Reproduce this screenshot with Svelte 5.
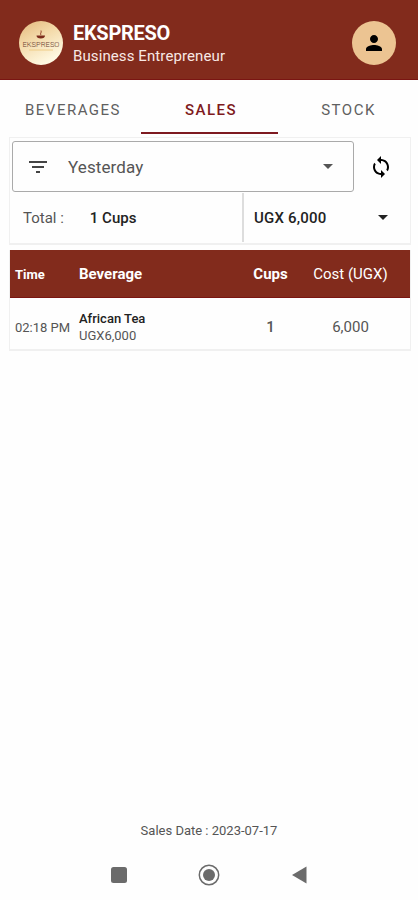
<script>
	let tabs = ["Beverages", "Sales", "Stock"];
	let active = "Sales";
	let filter = "Yesterday";
	let currency = "UGX";
	let salesDate = "2023-07-17";
	let sales = [
		{ time: "02:18 PM", beverage: "African Tea", price: 6000, cups: 1 },
	];

	/**
	 *
	 * @param {number} n
	 */
	function format(n) {
		return n.toLocaleString("en-US");
	}

	$: totalCups = sales.reduce((sum, sale) => sum + sale.cups, 0);
	$: totalCost = sales.reduce((sum, sale) => sum + sale.cups * sale.price, 0);
</script>

<div class="screen">
	<header>
		<svg class="logo" viewBox="0 0 44 44">
			<defs>
				<linearGradient id="gold" x1="0" y1="0" x2="0.5" y2="1">
					<stop offset="0" stop-color="#e3b77c" />
					<stop offset="0.45" stop-color="#f3d9a8" />
					<stop offset="1" stop-color="#fff9e2" />
				</linearGradient>
			</defs>
			<circle cx="22" cy="22" r="22" fill="url(#gold)" />
			<path d="M17.500 14.500h8.500c0 2-1.500 3-4.200 3s-4.300-1-4.300-3z" fill="#7c2c1c" />
			<path d="M22 14c-1.500-1.500 1-2.200 0-4.500" fill="none" stroke="#9a4a30" stroke-width="1" />
			<text x="22" y="26" text-anchor="middle" textLength="37" lengthAdjust="spacingAndGlyphs">EKSPRESO</text>
			<path d="M10 29h24" stroke="#f0cd88" stroke-width="1" />
		</svg>
		<div class="titles">
			<h1>EKSPRESO</h1>
			<p>Business Entrepreneur</p>
		</div>
		<button class="avatar" aria-label="Profile">
			<svg width="24" height="24" viewBox="0 0 24 24">
				<path d="M12 12c2.210 0 4-1.790 4-4s-1.790-4-4-4-4 1.790-4 4 1.790 4 4 4zm0 2c-2.670 0-8 1.340-8 4v2h16v-2c0-2.660-5.330-4-8-4z" />
			</svg>
		</button>
	</header>

	<nav>
		{#each tabs as tab (tab)}
			<button class:active={tab === active} on:click={() => (active = tab)}>{tab}</button>
		{/each}
	</nav>

	<section class="card summary">
		<div class="filter">
			<button class="select">
				<svg width="24" height="24" viewBox="0 0 24 24">
					<path d="M10 18h4v-2h-4v2zM3 6v2h18V6H3zm3 7h12v-2H6v2z" />
				</svg>
				<span>{filter}</span>
				<i class="caret"></i>
			</button>
			<button class="sync" aria-label="Refresh">
				<svg width="24" height="24" viewBox="0 0 24 24">
					<path d="M12 4V1L8 5l4 4V6c3.310 0 6 2.690 6 6 0 1.010-.25 1.970-.7 2.800l1.460 1.460C19.540 15.030 20 13.570 20 12c0-4.420-3.580-8-8-8zm0 14c-3.310 0-6-2.690-6-6 0-1.010.25-1.970.7-2.800L5.240 7.740C4.460 8.970 4 10.430 4 12c0 4.420 3.580 8 8 8v3l4-4-4-4v3z" />
				</svg>
			</button>
		</div>
		<div class="totals">
			<div class="cups">
				<span>Total :</span>
				<b>{totalCups} Cups</b>
			</div>
			<div class="amount">
				<b>{currency} {format(totalCost)}</b>
				<i class="caret dark"></i>
			</div>
		</div>
	</section>

	<section class="card sales">
		<div class="row head">
			<span class="small">Time</span>
			<span>Beverage</span>
			<span class="center">Cups</span>
			<span class="center cost">Cost ({currency})</span>
		</div>
		{#each sales as sale}
			<div class="row">
				<span class="time">{sale.time}</span>
				<div class="beverage">
					<b>{sale.beverage}</b>
					<span>{currency}{format(sale.price)}</span>
				</div>
				<span class="center count">{sale.cups}</span>
				<span class="center price">{format(sale.cups * sale.price)}</span>
			</div>
		{/each}
	</section>

	<footer>Sales Date : {salesDate}</footer>

	<div class="system">
		<svg width="16" height="16" viewBox="0 0 16 16">
			<rect width="16" height="16" rx="2.500" />
		</svg>
		<svg width="22" height="22" viewBox="0 0 22 22">
			<circle cx="11" cy="11" r="9.700" fill="none" stroke="#6b6b6b" stroke-width="1.500" />
			<circle cx="11" cy="11" r="6" />
		</svg>
		<svg width="16" height="18" viewBox="0 0 16 18">
			<path d="M15.500 0.500v17L1 9z" />
		</svg>
	</div>
</div>

<style>
	:global(body) {
		margin: 0;
		background: #fefefe;
	}
	.screen {
		display: flex;
		flex-direction: column;
		box-sizing: border-box;
		height: 900px;
		font-family: Roboto, sans-serif;
		color: #555;
	}
	button {
		border: 0;
		padding: 0;
		background: none;
		font: inherit;
		color: inherit;
	}
	svg {
		display: block;
		flex: none;
	}
	header {
		display: flex;
		align-items: center;
		box-sizing: border-box;
		height: 80px;
		padding: 6px 22px 0 19px;
		background: #822b1c;
		border-bottom: 1px solid #7a1512;
		color: #fff;
	}
	.logo {
		width: 44px;
		height: 44px;
		overflow: visible;
	}
	.logo text {
		font-size: 8px;
		font-weight: 300;
		fill: #6a4030;
	}
	.titles {
		flex: 1;
		margin-left: 10px;
		padding-top: 3px;
	}
	h1 {
		margin: 0;
		font-size: 20px;
		line-height: 24px;
		font-weight: 700;
		letter-spacing: -0.300px;
	}
	p {
		margin: 0;
		font-size: 15px;
		line-height: 22px;
		letter-spacing: 0.100px;
		color: #f8e8e4;
	}
	.avatar {
		display: grid;
		place-items: center;
		width: 44px;
		height: 44px;
		border-radius: 50%;
		background: #ecc492;
	}
	nav {
		display: grid;
		grid-template-columns: 141px 137px 140px;
		height: 54px;
	}
	nav button {
		padding-top: 7px;
		padding-left: 5px;
		border-bottom: 2px solid transparent;
		font-size: 15px;
		letter-spacing: 1.500px;
		text-transform: uppercase;
		color: #606060;
	}
	nav button:last-child {
		padding-left: 1px;
	}
	nav button.active {
		padding-left: 3px;
		border-color: #7e1a20;
		color: #7e1a20;
		font-weight: 500;
	}
	.card {
		box-sizing: border-box;
		width: 402px;
		margin-left: 9px;
		border: 1px solid #f0f0f0;
		border-width: 1px 1px 2px;
	}
	.summary {
		height: 108px;
		margin-top: 3px;
	}
	.filter {
		display: flex;
		padding: 3px 2px 0 2px;
	}
	.select {
		display: flex;
		align-items: center;
		box-sizing: border-box;
		width: 342px;
		height: 51px;
		padding: 0 20px 0 13px;
		border: 1px solid #aaa;
		border-radius: 3px;
		font-size: 17px;
		letter-spacing: 0.100px;
		text-align: left;
	}
	.select span {
		flex: 1;
		margin-left: 18px;
		padding-top: 1px;
	}
	.select svg {
		fill: #444;
	}
	.caret {
		border: 5px solid transparent;
		border-top-color: #555;
		border-bottom: 0;
	}
	.caret.dark {
		border-top-color: #222;
	}
	.sync {
		flex: 1;
		display: grid;
		place-items: center;
	}
	.totals {
		display: flex;
		height: 49px;
		margin-top: 1px;
		font-size: 15px;
	}
	.totals b {
		font-weight: 500;
		color: #222;
	}
	.cups {
		display: flex;
		align-items: center;
		gap: 26px;
		box-sizing: border-box;
		width: 234px;
		padding-left: 13px;
		border-right: 2px solid #ddd;
	}
	.amount {
		flex: 1;
		display: flex;
		align-items: center;
		justify-content: space-between;
		padding: 0 22px 0 10px;
		letter-spacing: 0.200px;
	}
	.sales {
		margin-top: 5px;
		border-top: 0;
	}
	.row {
		display: grid;
		grid-template-columns: 64px 158px 67px 93px;
		align-items: center;
		box-sizing: border-box;
		height: 51px;
		padding-left: 5px;
		font-size: 15px;
	}
	.head {
		height: 48px;
		padding-top: 1px;
		background: #822b1c;
		border-bottom: 1px solid #7a1512;
		color: #fff;
		font-weight: 700;
	}
	.small {
		font-size: 13px;
	}
	.center {
		text-align: center;
	}
	.cost {
		font-weight: 400;
	}
	.time {
		padding-top: 7px;
		font-size: 13px;
		white-space: nowrap;
	}
	.beverage {
		display: flex;
		flex-direction: column;
		padding-top: 7px;
		font-size: 13px;
		line-height: 17px;
	}
	.beverage b {
		font-weight: 500;
		color: #222;
	}
	.count,
	.price {
		padding-top: 7px;
	}
	.count {
		font-weight: 500;
	}
	footer {
		margin-top: auto;
		padding-bottom: 18px;
		font-size: 13px;
		line-height: 17px;
		text-align: center;
	}
	.system {
		display: grid;
		grid-template-columns: repeat(3, 90px);
		place-content: center;
		place-items: center;
		height: 36px;
		margin-bottom: 7px;
	}
	.system svg {
		fill: #6b6b6b;
	}
</style>
